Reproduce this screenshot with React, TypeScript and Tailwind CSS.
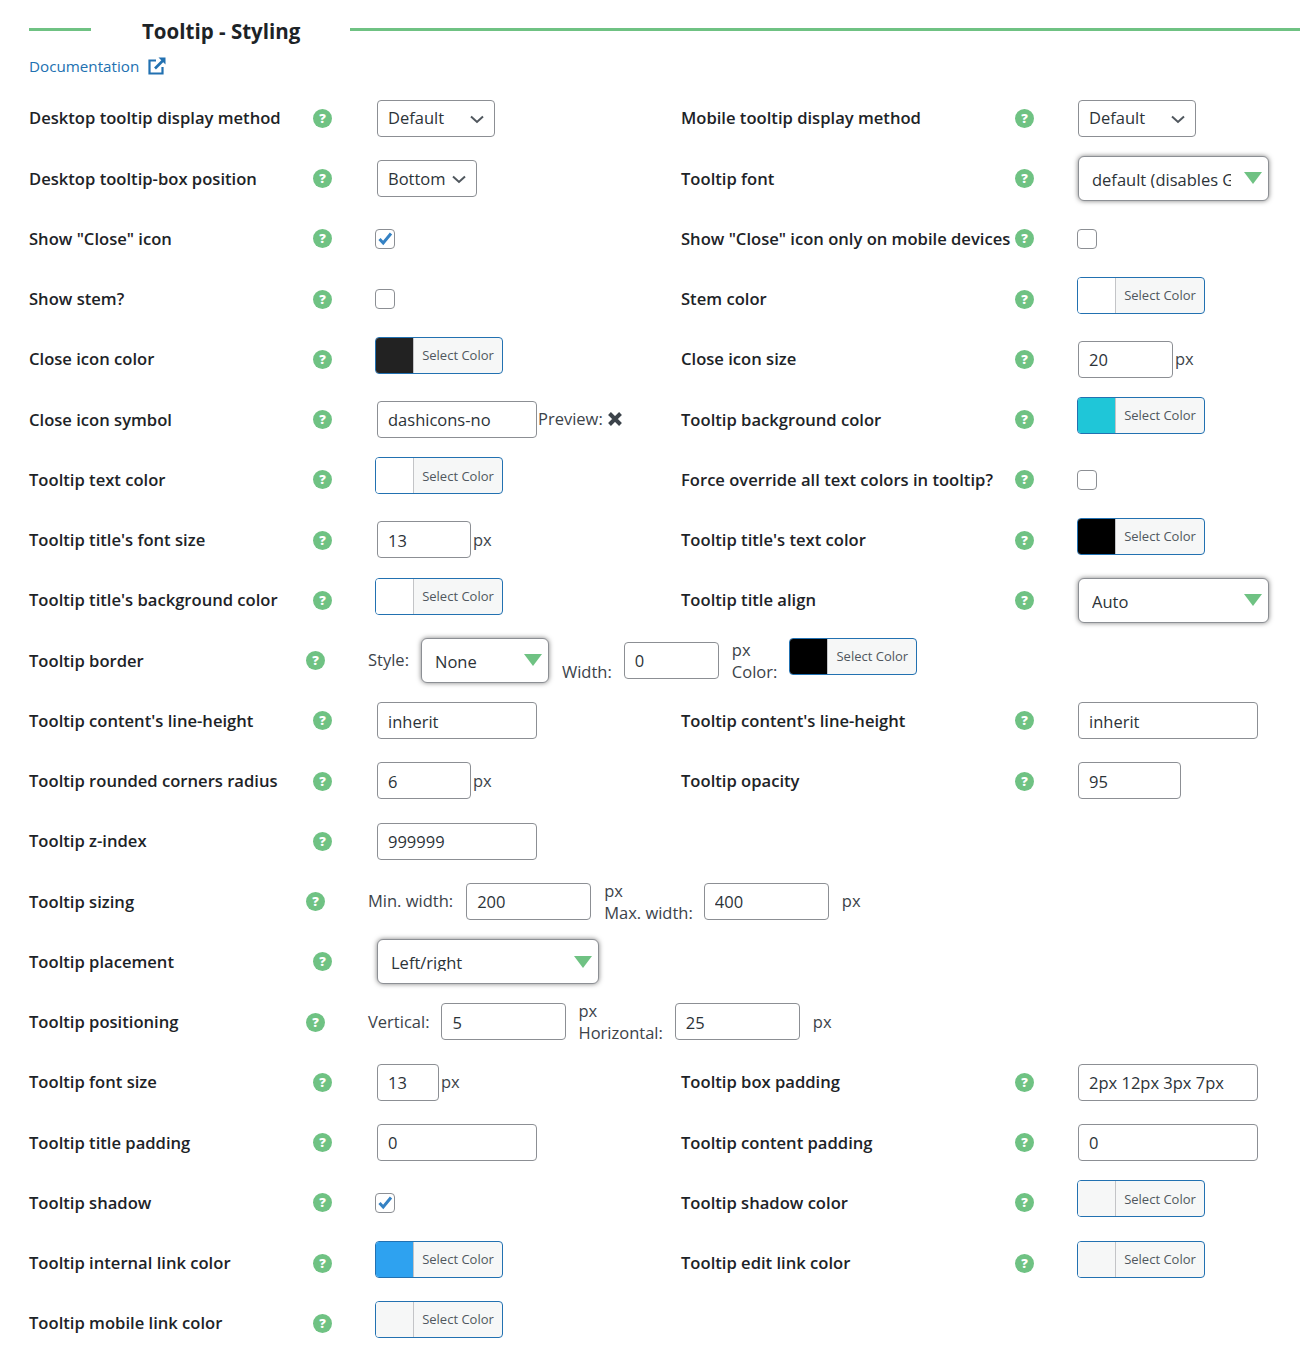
import type { ReactNode } from "react";

const font = { fontFamily: '"Open Sans", "Noto Sans", sans-serif' };

const Help = () => (
  <div className="w-[19px] h-[19px] mt-[0.500px] shrink-0 rounded-full bg-[#6fc283] flex items-center justify-center text-white text-[13px] font-extrabold leading-none">
    ?
  </div>
);

const Chevron = () => (
  <svg width="16" height="16" viewBox="0 0 16 16" fill="none" className="shrink-0">
    <path d="M2 5.500 8 11l6-5.500" stroke="#50575e" strokeWidth="2" />
  </svg>
);

const Select = ({ value, w }: { value: string; w: string }) => (
  <div className={`${w} h-[37px] pt-[1px] border border-[#8c8f94] rounded-[4px] bg-white flex items-center justify-between pl-[10px] pr-[9px] text-[16.500px] text-[#2c3338]`}>
    <span>{value}</span>
    <Chevron />
  </div>
);

const FancySelect = ({ value, w, textW }: { value: string; w: string; textW: string }) => (
  <div className={`${w} h-[45px] border border-[#8c8f94] rounded-[6px] bg-white shadow-[0_0_5px_rgba(0,0,0,0.5)] flex items-center justify-between pl-[13px] pr-[6px] text-[16.500px] text-[#2c3338]`}>
    <span className={`${textW} h-[19px] leading-[22px] overflow-hidden whitespace-nowrap`}>{value}</span>
    <svg width="18" height="12" viewBox="0 0 18 12" className="shrink-0">
      <path d="M0 0h18L9 12z" fill="#6fc283" />
    </svg>
  </div>
);

const Input = ({ value, w }: { value: string; w: string }) => (
  <input
    readOnly
    value={value}
    style={font}
    className={`${w} h-[37px] pt-[1px] border border-[#8c8f94] rounded-[4px] bg-white px-[10px] text-[16.500px] text-[#2c3338] outline-none`}
  />
);

const Checkbox = ({ checked, right }: { checked?: boolean; right?: boolean }) => (
  <div className={`w-5 h-5 ${right ? "-ml-[1px]" : "-ml-[2px]"} border border-[#8c8f94] rounded-[4px] bg-white flex items-center justify-center`}>
    {checked && (
      <svg width="16" height="16" viewBox="0 0 16 16">
        <path d="M2.500 8 6.200 12 14 2.500" fill="none" stroke="#3582c4" strokeWidth="3" />
      </svg>
    )}
  </div>
);

const ColorPicker = ({ swatch, right }: { swatch: string; right?: boolean }) => (
  <div className={`w-[128px] h-[37px] ${right ? "-ml-[1px]" : "-ml-[2px]"} -mt-[7.500px] flex overflow-hidden rounded-[4px] border border-[#2271b1] bg-[#f6f7f7]`}>
    <div className={`${swatch} w-[38px] border-r border-[#c3c4c7]`} />
    <div className="flex-1 flex items-center justify-center pt-[1px] text-[13px] text-[#50575e]">Select Color</div>
  </div>
);

const Px = () => <span className="text-[16.500px] text-[#3c434a] ml-[2px]">px</span>;

const Left = ({ label, children }: { label: string; children?: ReactNode }) => (
  <div className="w-[652px] flex items-center shrink-0">
    <div className="w-[284px] pt-[1.500px] shrink-0 text-[16.600px] font-semibold text-[#1d2327] whitespace-nowrap">{label}</div>
    <Help />
    <div className="ml-[45px] flex items-center">{children}</div>
  </div>
);

const Right = ({ label, children }: { label: string; children?: ReactNode }) => (
  <div className="flex items-center">
    <div className="w-[334px] pt-[1.500px] shrink-0 text-[16.600px] font-semibold text-[#1d2327] whitespace-nowrap">{label}</div>
    <Help />
    <div className="ml-[44px] flex items-center">{children}</div>
  </div>
);

const Row = ({ children }: { children: ReactNode }) => (
  <div className="h-[60.250px] flex items-center">{children}</div>
);

const WideRow = ({ label, children }: { label: string; children: ReactNode }) => (
  <Row>
    <div className="w-[277px] pt-[1.500px] shrink-0 text-[16.600px] font-semibold text-[#1d2327]">{label}</div>
    <Help />
    <div className="ml-[43px] flex items-center text-[16.500px] text-[#3c434a]">{children}</div>
  </Row>
);

const Stacked = ({ second, ml }: { second: string; ml: string }) => (
  <div className={`${ml} flex flex-col leading-[22px] pt-[1px]`}>
    <span>px</span>
    <span>{second}</span>
  </div>
);

export default function App() {
  return (
    <div style={font} className="w-[1300px] h-[1360px] bg-white overflow-hidden pl-[29px]">
      {/* Section heading */}
      <div className="h-[88px]">
        <div className="flex items-center h-[58px]">
          <div className="w-[62px] h-[3px] bg-[#6fc283]" />
          <h2 className="w-[259px] pl-[51px] pt-[4px] text-[20.500px] font-bold text-[#1d2327] whitespace-nowrap">Tooltip - Styling</h2>
          <div className="flex-1 h-[3px] bg-[#6fc283]" />
        </div>
        <a className="-mt-[1px] flex items-center gap-[9px] text-[15.200px] text-[#2271b1] leading-[18px]">
          Documentation
          <svg width="18" height="18" viewBox="0 0 18 18" fill="none">
            <path d="M8 3.500H1.500v13h13V10" stroke="#2271b1" strokeWidth="2.200" />
            <path d="M7 11.500 15 3.500" stroke="#2271b1" strokeWidth="2.600" />
            <path d="M10.500 0.500h7v7z" fill="#2271b1" />
          </svg>
        </a>
      </div>

      <Row>
        <Left label="Desktop tooltip display method"><Select value="Default" w="w-[118px]" /></Left>
        <Right label="Mobile tooltip display method"><Select value="Default" w="w-[118px]" /></Right>
      </Row>
      <Row>
        <Left label="Desktop tooltip-box position"><Select value="Bottom" w="w-[100px]" /></Left>
        <Right label="Tooltip font"><FancySelect value="default (disables Google Fonts)" w="w-[191px]" textW="w-[139px]" /></Right>
      </Row>
      <Row>
        <Left label={'Show "Close" icon'}><Checkbox checked /></Left>
        <Right label={'Show "Close" icon only on mobile devices'}><Checkbox right /></Right>
      </Row>
      <Row>
        <Left label="Show stem?"><Checkbox /></Left>
        <Right label="Stem color"><ColorPicker swatch="bg-white" right /></Right>
      </Row>
      <Row>
        <Left label="Close icon color"><ColorPicker swatch="bg-[#222222]" /></Left>
        <Right label="Close icon size"><Input value="20" w="w-[95px]" /><Px /></Right>
      </Row>
      <Row>
        <Left label="Close icon symbol">
          <Input value="dashicons-no" w="w-[160px]" />
          <span className="ml-[1px] text-[16.500px] text-[#3c434a]">Preview:</span>
          <svg width="16" height="16" viewBox="0 0 16 16" className="ml-[4px]">
            <path d="M2.500 2.500 13.500 13.500M13.500 2.500 2.500 13.500" stroke="#3c434a" strokeWidth="4" />
          </svg>
        </Left>
        <Right label="Tooltip background color"><ColorPicker swatch="bg-[#1fc6d8]" right /></Right>
      </Row>
      <Row>
        <Left label="Tooltip text color"><ColorPicker swatch="bg-white" /></Left>
        <Right label="Force override all text colors in tooltip?"><Checkbox right /></Right>
      </Row>
      <Row>
        <Left label="Tooltip title's font size"><Input value="13" w="w-[94px]" /><Px /></Left>
        <Right label="Tooltip title's text color"><ColorPicker swatch="bg-black" right /></Right>
      </Row>
      <Row>
        <Left label="Tooltip title's background color"><ColorPicker swatch="bg-white" /></Left>
        <Right label="Tooltip title align"><FancySelect value="Auto" w="w-[191px]" textW="w-[139px]" /></Right>
      </Row>

      <WideRow label="Tooltip border">
        <span className="mr-[12px]">Style:</span>
        <FancySelect value="None" w="w-[128px]" textW="w-[80px]" />
        <span className="ml-[13px] mr-[12px] mt-[24px]">Width:</span>
        <Input value="0" w="w-[95px]" />
        <Stacked second="Color:" ml="ml-[13px]" />
        <div className="ml-[14px]"><ColorPicker swatch="bg-black" /></div>
      </WideRow>

      <Row>
        <Left label="Tooltip content's line-height"><Input value="inherit" w="w-[160px]" /></Left>
        <Right label="Tooltip content's line-height"><Input value="inherit" w="w-[180px]" /></Right>
      </Row>
      <Row>
        <Left label="Tooltip rounded corners radius"><Input value="6" w="w-[94px]" /><Px /></Left>
        <Right label="Tooltip opacity"><Input value="95" w="w-[103px]" /></Right>
      </Row>
      <Row>
        <Left label="Tooltip z-index"><Input value="999999" w="w-[160px]" /></Left>
      </Row>

      <WideRow label="Tooltip sizing">
        <span className="mr-[13px]">Min. width:</span>
        <Input value="200" w="w-[125px]" />
        <Stacked second="Max. width:" ml="ml-[13px]" />
        <div className="ml-[11px]"><Input value="400" w="w-[125px]" /></div>
        <span className="ml-[13px]">px</span>
      </WideRow>

      <Row>
        <Left label="Tooltip placement"><FancySelect value="Left/right" w="w-[222px]" textW="w-[170px]" /></Left>
      </Row>

      <WideRow label="Tooltip positioning">
        <span className="mr-[12px]">Vertical:</span>
        <Input value="5" w="w-[125px]" />
        <Stacked second="Horizontal:" ml="ml-[12px]" />
        <div className="ml-[12px]"><Input value="25" w="w-[125px]" /></div>
        <span className="ml-[13px]">px</span>
      </WideRow>

      <Row>
        <Left label="Tooltip font size"><Input value="13" w="w-[62px]" /><Px /></Left>
        <Right label="Tooltip box padding"><Input value="2px 12px 3px 7px" w="w-[180px]" /></Right>
      </Row>
      <Row>
        <Left label="Tooltip title padding"><Input value="0" w="w-[160px]" /></Left>
        <Right label="Tooltip content padding"><Input value="0" w="w-[180px]" /></Right>
      </Row>
      <Row>
        <Left label="Tooltip shadow"><Checkbox checked /></Left>
        <Right label="Tooltip shadow color"><ColorPicker swatch="bg-[#f6f7f7]" right /></Right>
      </Row>
      <Row>
        <Left label="Tooltip internal link color"><ColorPicker swatch="bg-[#2ea2f0]" /></Left>
        <Right label="Tooltip edit link color"><ColorPicker swatch="bg-[#f6f7f7]" right /></Right>
      </Row>
      <Row>
        <Left label="Tooltip mobile link color"><ColorPicker swatch="bg-[#f6f7f7]" /></Left>
      </Row>
    </div>
  );
}
